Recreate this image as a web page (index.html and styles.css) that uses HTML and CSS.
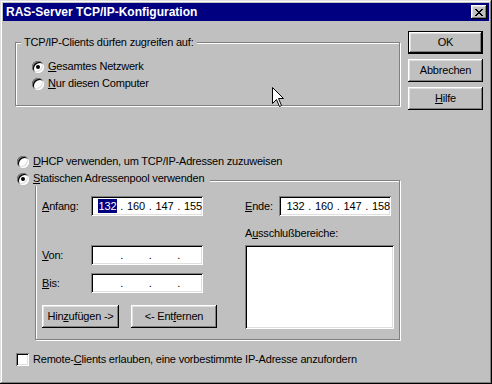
FILE: index.html
```html
<!DOCTYPE html>
<html lang="de">
<head>
  <meta charset="UTF-8">
  <meta name="viewport" content="width=device-width, initial-scale=1.0">
  <title>RAS-Server TCP/IP-Konfiguration</title>
  <link rel="stylesheet" href="styles.css">
</head>
<body>
  <div class="window">
    <div class="titlebar">
      <span class="title">RAS-Server TCP/IP-Konfiguration</span>
      <span class="close">
        <svg width="8" height="7" viewBox="0 0 8 7"><path d="M0 0h2v1h-2zM6 0h2v1h-2zM1 1h2v1h-2zM5 1h2v1h-2zM2 2h4v1h-4zM3 3h2v1h-2zM2 4h4v1h-4zM1 5h2v1h-2zM5 5h2v1h-2zM0 6h2v1h-2zM6 6h2v1h-2z" fill="#000"/></svg>
      </span>
    </div>

    <div class="dialog">
      <div class="top">
        <div class="group group-clients">
          <div class="group-title">TCP/IP-Clients dürfen zugreifen auf:</div>
          <div class="options">
            <div class="option"><span class="radio checked"></span><span><u>G</u>esamtes Netzwerk</span></div>
            <div class="option"><span class="radio"></span><span><u>N</u>ur diesen Computer</span></div>
          </div>
        </div>
        <div class="buttons">
          <button class="btn btn-default">OK</button>
          <button class="btn">Abbrechen</button>
          <button class="btn"><u>H</u>ilfe</button>
        </div>
      </div>

      <div class="option option-dhcp"><span class="radio"></span><span><u>D</u>HCP verwenden, um TCP/IP-Adressen zuzuweisen</span></div>

      <div class="group group-pool">
        <div class="pool-title"><span class="radio checked"></span><span><u>S</u>tatischen Adressenpool verwenden</span></div>
        <div class="pool-grid">
          <div class="field-row">
            <span class="field-label"><u>A</u>nfang:</span>
            <div class="ip"><span class="octet selected">132</span><span class="dot">.</span><span class="octet">160</span><span class="dot">.</span><span class="octet">147</span><span class="dot">.</span><span class="octet">155</span></div>
          </div>
          <div class="field-row">
            <span class="field-label label-short"><u>E</u>nde:</span>
            <div class="ip"><span class="octet">132</span><span class="dot">.</span><span class="octet">160</span><span class="dot">.</span><span class="octet">147</span><span class="dot">.</span><span class="octet">158</span></div>
          </div>

          <div class="pool-left">
            <div class="field-row">
              <span class="field-label"><u>V</u>on:</span>
              <div class="ip"><span class="octet"></span><span class="dot">.</span><span class="octet"></span><span class="dot">.</span><span class="octet"></span><span class="dot">.</span><span class="octet"></span></div>
            </div>
            <div class="field-row row-bis">
              <span class="field-label"><u>B</u>is:</span>
              <div class="ip"><span class="octet"></span><span class="dot">.</span><span class="octet"></span><span class="dot">.</span><span class="octet"></span><span class="dot">.</span><span class="octet"></span></div>
            </div>
            <div class="pool-buttons">
              <button class="btn btn-add">Hin<u>z</u>ufügen -&gt;</button>
              <button class="btn btn-remove">&lt;- Ent<u>f</u>ernen</button>
            </div>
          </div>

          <div class="pool-right">
            <div class="list-label">A<u>u</u>sschlußbereiche:</div>
            <div class="listbox"></div>
          </div>
        </div>
      </div>

      <div class="option option-remote"><span class="check"></span><span>Remote-<u>C</u>lients erlauben, eine vorbestimmte IP-Adresse anzufordern</span></div>
    </div>

    <!-- mouse pointer -->
    <svg class="cursor" width="13" height="21" viewBox="0 0 13 21">
      <path d="M0.5 0.5V16.5L4.5 12.5L7.5 19.5L9.5 18.5L6.5 11.5H11.5Z" fill="#fff" stroke="#000" stroke-width="1" stroke-linejoin="miter"/>
    </svg>
  </div>
</body>
</html>
```

FILE: styles.css
```css
body {
  margin: 0;
  background-color: #c0c0c0;
  font-family: "Liberation Sans", Arial, sans-serif;
  font-size: 11px;
  line-height: 13px;
  letter-spacing: -0.2px;
  color: #000;
}
u {
  text-decoration: underline;
  text-underline-offset: 1px;
}
.window {
  position: relative;
  width: 492px;
  height: 384px;
  box-sizing: border-box;
  padding: 3px;
  background: #c0c0c0;
  box-shadow: inset -1px -1px #000, inset 1px 1px #dfdfdf, inset -2px -2px #808080, inset 2px 2px #fff;
}
.titlebar {
  display: flex;
  align-items: center;
  justify-content: space-between;
  height: 18px;
  padding: 0 2px 0 3px;
  background: #000080;
  color: #fff;
  font-size: 12px;
  font-weight: bold;
  letter-spacing: 0;
}
.close {
  display: flex;
  align-items: center;
  justify-content: center;
  width: 16px;
  height: 14px;
  background: #c0c0c0;
  box-shadow: inset -1px -1px #000, inset 1px 1px #fff, inset -2px -2px #808080, inset 2px 2px #dfdfdf;
}
.dialog {
  display: flex;
  flex-direction: column;
  align-items: flex-start;
  padding-top: 10px;
}
.top {
  display: flex;
  align-items: flex-start;
  padding-left: 12px;
}
.group {
  display: flex;
  flex-direction: column;
  align-items: flex-start;
  box-sizing: border-box;
  border: 1px solid #808080;
  box-shadow: inset 1px 1px #fff, 1px 1px #fff;
}
.group-clients {
  width: 385px;
  height: 64px;
  margin-top: 11px;
}
.group-title {
  height: 13px;
  margin: -7px 0 0 5px;
  padding: 0 3px;
  background: #c0c0c0;
}
.options {
  display: flex;
  flex-direction: column;
  margin-top: 9px;
  padding-left: 16px;
}
.option {
  display: flex;
  align-items: center;
  gap: 4px;
  height: 17px;
}
.radio {
  position: relative;
  width: 12px;
  height: 12px;
  border-radius: 50%;
  background: #fff;
  box-shadow: inset 1px 1px #808080, inset -1px -1px #fff, inset 2px 2px #000, inset -2px -2px #dfdfdf;
}
.radio.checked::after {
  content: "";
  position: absolute;
  left: 4px;
  top: 4px;
  width: 4px;
  height: 4px;
  border-radius: 50%;
  background: #000;
}
.check {
  width: 13px;
  height: 13px;
  box-sizing: border-box;
  background: #fff;
  box-shadow: inset 1px 1px #808080, inset -1px -1px #fff, inset 2px 2px #000, inset -2px -2px #dfdfdf;
}
.buttons {
  display: flex;
  flex-direction: column;
  gap: 5px;
  margin-left: 8px;
}
.btn {
  width: 75px;
  height: 23px;
  padding: 0;
  border: none;
  background: #c0c0c0;
  color: #000;
  font: inherit;
  letter-spacing: inherit;
  box-shadow: inset -1px -1px #000, inset 1px 1px #fff, inset -2px -2px #808080, inset 2px 2px #dfdfdf;
}
.btn-default {
  border: 1px solid #000;
}
.option-dhcp {
  margin: 43px 0 0 14px;
}
.group-pool {
  width: 365px;
  height: 160px;
  margin: 10px 0 0 32px;
}
.pool-title {
  display: flex;
  align-items: center;
  gap: 4px;
  height: 15px;
  margin: -10px 0 0 -19px;
  padding-right: 6px;
  background: #c0c0c0;
}
.pool-grid {
  display: grid;
  grid-template-columns: 203px 148px;
  align-items: start;
  margin: 10px 0 0 6px;
}
.field-row {
  display: flex;
  align-items: center;
}
.field-label {
  width: 49px;
}
.label-short {
  width: 34px;
}
.ip {
  display: flex;
  align-items: center;
  width: 112px;
  height: 20px;
  box-sizing: border-box;
  padding-left: 7px;
  background: #fff;
  box-shadow: inset 1px 1px #808080, inset -1px -1px #fff, inset 2px 2px #000, inset -2px -2px #dfdfdf;
}
.octet {
  width: 19px;
  height: 14px;
  line-height: 14px;
  text-align: center;
}
.octet.selected {
  background: #000080;
  color: #fff;
}
.dot {
  width: 9.5px;
  text-align: center;
}
.pool-left {
  display: flex;
  flex-direction: column;
  padding-top: 29px;
}
.row-bis {
  margin-top: 8px;
}
.pool-buttons {
  display: flex;
  gap: 12px;
  margin-top: 12px;
}
.btn-add {
  width: 77px;
}
.btn-remove {
  width: 86px;
}
.list-label {
  margin-top: 11px;
}
.listbox {
  width: 149px;
  height: 84px;
  margin-top: 5px;
  background: #fff;
  box-shadow: inset 1px 1px #808080, inset -1px -1px #fff, inset 2px 2px #000, inset -2px -2px #dfdfdf;
}
.option-remote {
  height: 15px;
  margin: 12px 0 0 13px;
}
.cursor {
  position: absolute;
  left: 272px;
  top: 87px;
}
```
